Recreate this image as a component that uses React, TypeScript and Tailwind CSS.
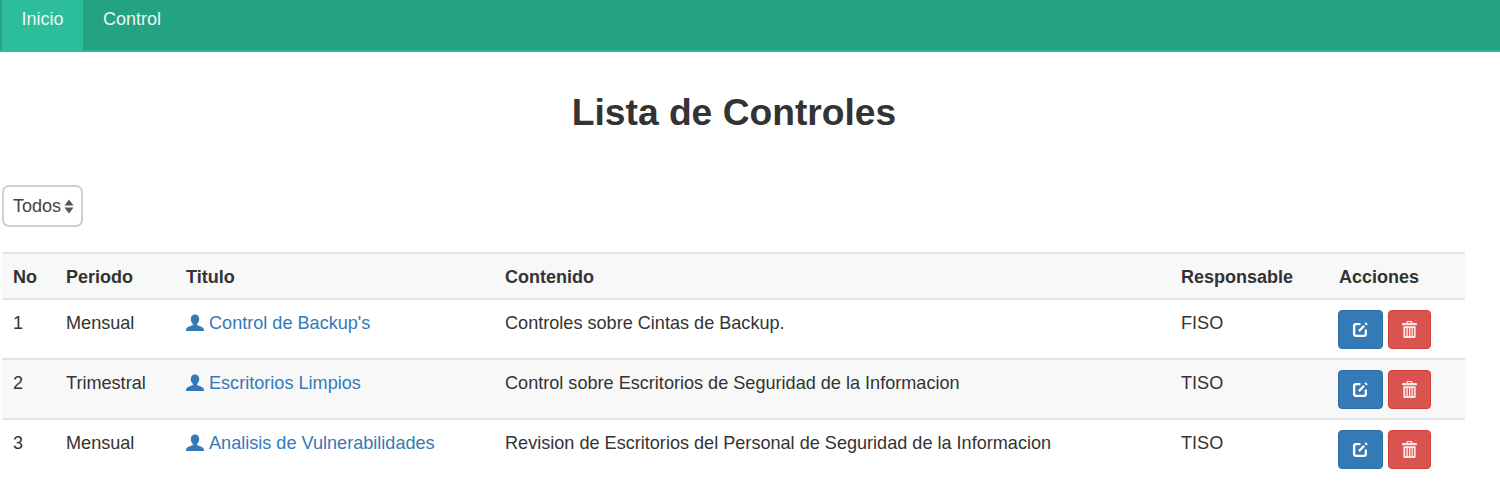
const ROWS = [
  { no: 1, periodo: 'Mensual', titulo: "Control de Backup's", contenido: 'Controles sobre Cintas de Backup.', responsable: 'FISO', striped: false },
  { no: 2, periodo: 'Trimestral', titulo: 'Escritorios Limpios', contenido: 'Control sobre Escritorios de Seguridad de la Informacion', responsable: 'TISO', striped: true },
  { no: 3, periodo: 'Mensual', titulo: 'Analisis de Vulnerabilidades', contenido: 'Revision de Escritorios del Personal de Seguridad de la Informacion', responsable: 'TISO', striped: false },
];

function UserIcon() {
  return (
    <svg viewBox="0 0 18 18" className="w-[18px] h-[18px] fill-[#337ab7] shrink-0 -mt-[1px]">
      <path d="M9 0.5c2.6 0 4.2 2 4.2 4.6 0 1.9-.8 3.6-1.9 4.6-.4.4-.4 1 0 1.4.5.5 4.6 1.6 5.9 3 .6.7.8 1.6.8 2.9H0c0-1.3.2-2.2.8-2.9 1.3-1.4 5.4-2.5 5.9-3 .4-.4.4-1 0-1.4C5.600 8.700 4.800 7 4.800 5.100 4.800 2.500 6.400.5 9 .5z" />
    </svg>
  );
}

function EditIcon() {
  return (
    <svg viewBox="0 0 16 16" className="w-[17px] h-[17px] fill-none stroke-white">
      <path d="M8 3H3.500A1.500 1.500 0 0 0 2 4.500v8A1.500 1.500 0 0 0 3.500 14h8a1.500 1.500 0 0 0 1.500-1.500V8" strokeWidth="2.200" />
      <path d="M6.500 9.500 11.500 4.500" strokeWidth="2.200" />
      <path d="M13 1.200l1.800 1.800-1.300 1.200-1.800-1.800z" className="fill-white stroke-none" />
    </svg>
  );
}

function TrashIcon() {
  return (
    <svg viewBox="0 0 16 18" className="w-[15px] h-[17px] fill-[#fbe9e8]">
      <path d="M6 0h4a1 1 0 0 1 1 1v1h4a1 1 0 0 1 1 1v1.500H0V3a1 1 0 0 1 1-1h4V1a1 1 0 0 1 1-1zM6.500 1v1h3V1z" fillRule="evenodd" />
      <path d="M1.500 5.500h13V17a1 1 0 0 1-1 1h-11a1 1 0 0 1-1-1zM3.500 7.500v8.500h1.200V7.500zM6.200 7.500v8.500h1.200V7.500zM8.900 7.500v8.500h1.200V7.500zM11.500 7.500v8.500h1.200V7.500z" fillRule="evenodd" />
    </svg>
  );
}

export default function App() {
  return (
    <div className="w-[1500px] h-[493px] overflow-hidden bg-white text-[#333] font-['Liberation_Sans',Arial,sans-serif] text-[18px]">
      <nav className="h-[52px] bg-[#23a383] border-b-2 border-[#2abb98] flex pl-[2px]">
        <a className="w-[81px] h-[50px] bg-[#2cbe9a] text-[#ecf5f2] pb-[12px] flex items-center justify-center">Inicio</a>
        <a className="w-[98px] h-[50px] text-[#ecf5f2] pb-[12px] flex items-center justify-center">Control</a>
      </nav>

      <h1 className="text-[37.2px] font-bold text-center leading-[42px] mt-[39px] ml-[-32px]">Lista de Controles</h1>

      <div className="mt-[52px] pl-[2px]">
        <button className="w-[81px] h-[42px] border-2 border-[#cfcfcf] rounded-[7px] bg-white flex items-center pl-[9px] gap-[3px] text-[#444]">
          Todos
          <svg viewBox="0 0 10 15" className="w-[10px] h-[15px] fill-[#555]">
            <path d="M5 0.5 9.500 6.500H.5zM5 14.500.5 8.500h9z" />
          </svg>
        </button>
      </div>

      <div className="mt-[25px] ml-[2px] w-[1463px]">
        <div className="grid grid-cols-[53px_120px_319px_676px_158px_137px] h-[48px] pt-[2px] bg-[#f8f8f8] border-y-2 border-[#e3e3e3] items-center font-bold text-[#333] [&>div]:pl-[11px]">
          <div>No</div>
          <div>Periodo</div>
          <div>Titulo</div>
          <div>Contenido</div>
          <div>Responsable</div>
          <div>Acciones</div>
        </div>
        {ROWS.map((r) => (
          <div
            key={r.no}
            className={`grid grid-cols-[53px_120px_319px_676px_158px_137px] h-[60px] border-b-2 border-[#e3e3e3] last:border-b-0 items-start pt-[10px] text-[18.1px] [&>div]:pl-[11px] ${r.striped ? 'bg-[#f8f8f8]' : 'bg-white'}`}
          >
            <div className="leading-[26px]">{r.no}</div>
            <div className="leading-[26px]">{r.periodo}</div>
            <div className="leading-[26px] flex items-center gap-[5px] text-[#337ab7]">
              <UserIcon />
              {r.titulo}
            </div>
            <div className="leading-[26px]">{r.contenido}</div>
            <div className="leading-[26px]">{r.responsable}</div>
            <div className="flex gap-[5px] !pl-[10px]">
              <button className="w-[45px] h-[39px] rounded-[4px] bg-[#337ab7] border border-[#2e6da4] flex items-center justify-center">
                <EditIcon />
              </button>
              <button className="w-[43px] h-[39px] rounded-[4px] bg-[#d9534f] border border-[#d43f3a] flex items-center justify-center">
                <TrashIcon />
              </button>
            </div>
          </div>
        ))}
      </div>
    </div>
  );
}
